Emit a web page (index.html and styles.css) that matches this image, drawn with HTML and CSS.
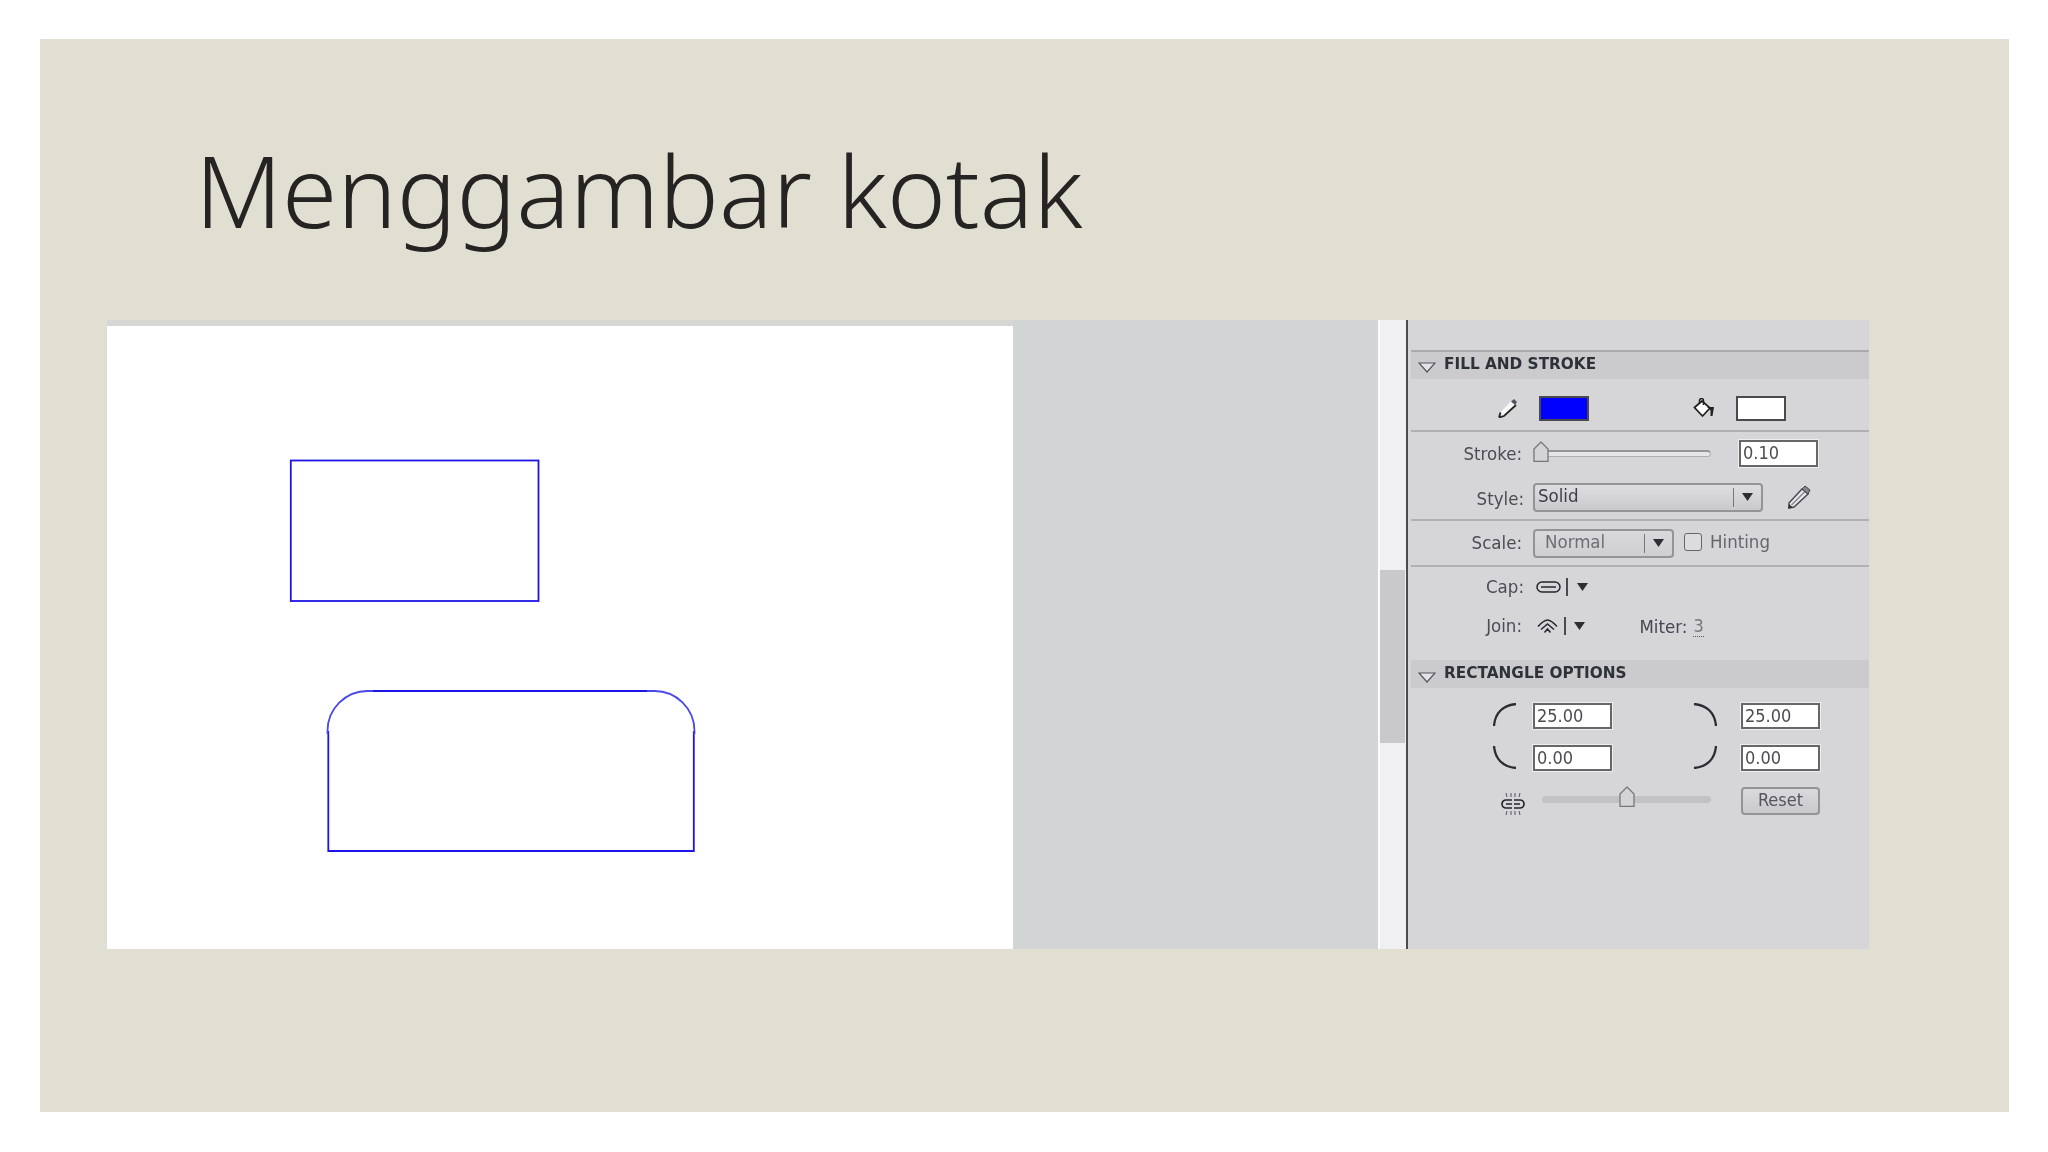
FILE: index.html
```html
<!DOCTYPE html>
<html lang="id">
<head>
<meta charset="utf-8">
<title>Menggambar kotak</title>
<link rel="stylesheet" href="styles.css">
</head>
<body>
<main class="slide">
  <header class="title-box"><h1 class="title">Menggambar kotak</h1></header>
  <section class="screen">
    <div class="stage">
      <div class="stage-band"></div>
      <svg class="canvas" viewBox="0 0 906 623" aria-label="Kanvas">
        <rect class="shape" x="183.800" y="134.500" width="247.700" height="140.500"/>
        <path class="shape" d="M221.300 405 V525 H586.800 V405 M261.500 365 H546.500"/>
        <path class="shape-arc" d="M220.500 408 V405 A40 40 0 0 1 260.500 365 H266 M540 365 H546.500 A40 40 0 0 1 587.500 405 V408"/>
      </svg>
    </div>
    <div class="paste"></div>
    <div class="scrollbar"><div class="scroll-thumb"></div></div>
    <aside class="panel">
      <div class="panel-top"></div>

      <div class="section-head section-head-first">
        <svg class="twist" viewBox="0 0 18 11"><path d="M1 1 H17 L9 10 Z"/></svg>
        <span class="section-name">FILL AND STROKE</span>
      </div>

      <div class="row row-fill">
        <svg class="ico-pencil" viewBox="0 0 20 20"><path class="pen-body" d="M2 15 L13 3 L18 8 L6 18 Z"/><path class="pen-edge" d="M1 19.500 L2.500 14.500 M1 19.500 L6 18 L18 7"/><path class="pen-head" d="M13 3.500 L16 1 L19 4 L17 7 Z"/></svg>
        <div class="swatch swatch-blue"></div>
        <svg class="ico-bucket" viewBox="0 0 22 20"><path class="bucket" d="M1.500 9.500 L9 3 L17 10 L9.500 18 Z"/><path class="bucket-line" d="M6.500 6 V2.500 A2 2 0 0 1 10.500 2.500 V7"/><path class="bucket-tip" d="M14 9 H21 L19.500 18 H17.500 V12 Z"/></svg>
        <div class="swatch swatch-white"></div>
      </div>

      <div class="row row-stroke">
        <span class="label">Stroke:</span>
        <div class="slider slider-stroke">
          <div class="track track-double"></div>
          <svg class="thumb thumb-start" viewBox="0 0 16 21"><path d="M1 20.500 V8 L8 1 L15 8 V20.500 Z"/></svg>
        </div>
        <div class="field field-stroke">0.10</div>
      </div>

      <div class="row row-style">
        <span class="label label-low">Style:</span>
        <div class="select select-style"><span class="select-text">Solid</span><span class="select-arrow"><svg class="arrow" viewBox="0 0 11 8"><path d="M0 0 H11 L5.500 8 Z"/></svg></span></div>
        <svg class="ico-edit" viewBox="0 0 24 24"><path class="edit-body" d="M2 18 L15 4 L21 9 L7 22 L2 23 Z"/><path class="edit-line" d="M4.500 20 L18 6.500"/><path class="edit-tip" d="M15 4 L18 1 L23 5 L21 9 Z"/><path class="edit-nib" d="M1 23.500 L2 19 L6 22.500 Z"/></svg>
      </div>

      <div class="row row-scale">
        <span class="label">Scale:</span>
        <div class="select select-scale"><span class="select-text select-text-dim">Normal</span><span class="select-arrow"><svg class="arrow" viewBox="0 0 11 8"><path d="M0 0 H11 L5.500 8 Z"/></svg></span></div>
        <div class="check"></div>
        <span class="check-label">Hinting</span>
      </div>

      <div class="row row-cap">
        <span class="label label-wide">Cap:</span>
        <svg class="ico-cap" viewBox="0 0 25 12"><rect class="ico-line" x="1" y="1" width="23" height="10" rx="5"/><path class="ico-line" d="M5 6 H20"/></svg>
        <span class="vsep vsep-cap"></span>
        <svg class="arrow arrow-cap" viewBox="0 0 11 8"><path d="M0 0 H11 L5.500 8 Z"/></svg>
      </div>

      <div class="row row-join">
        <span class="label">Join:</span>
        <svg class="ico-join" viewBox="0 0 21 15"><path class="ico-line" d="M1 7.500 Q7 1 10.500 1 Q14 1 20 7.500 M4 10.500 L10.500 5 L17 10.500 M7.500 13.500 L10.500 10 L13.500 13.500"/></svg>
        <span class="vsep vsep-join"></span>
        <svg class="arrow arrow-join" viewBox="0 0 11 8"><path d="M0 0 H11 L5.500 8 Z"/></svg>
        <span class="miter-label">Miter:</span>
        <span class="miter-value">3</span>
      </div>

      <div class="section-head section-head-second">
        <svg class="twist" viewBox="0 0 18 11"><path d="M1 1 H17 L9 10 Z"/></svg>
        <span class="section-name">RECTANGLE OPTIONS</span>
      </div>

      <div class="corners">
        <svg class="corner" viewBox="0 0 24 24"><path d="M23 1 C10 2 2 10 1 23"/></svg>
        <div class="field">25.00</div>
        <svg class="corner" viewBox="0 0 24 24"><path d="M1 1 C14 2 22 10 23 23"/></svg>
        <div class="field">25.00</div>

        <svg class="corner" viewBox="0 0 24 24"><path d="M1 1 C2 14 10 22 23 23"/></svg>
        <div class="field">0.00</div>
        <svg class="corner" viewBox="0 0 24 24"><path d="M23 1 C22 14 14 22 1 23"/></svg>
        <div class="field">0.00</div>

        <svg class="ico-link" viewBox="0 0 24 24"><path class="ico-link-line" d="M11 8 H5 A4 4 0 0 0 5 16 H11 M13 8 H19 A4 4 0 0 1 19 16 H13 M5 12 H11 M13 12 H19"/><path class="ico-dots" d="M5 1 L6 5 M10 1 V5 M14 1 V5 M19 1 L18 5 M5 23 L6 19 M10 23 V19 M14 23 V19 M19 23 L18 19"/></svg>
        <div class="slider slider-radius">
          <div class="track track-radius"></div>
          <svg class="thumb thumb-mid" viewBox="0 0 16 21"><path d="M1 20.500 V8 L8 1 L15 8 V20.500 Z"/></svg>
        </div>
        <div class="reset">Reset</div>
      </div>
    </aside>
  </section>
</main>
</body>
</html>
```
FILE: styles.css
```css
* { box-sizing: border-box; }

html, body { margin: 0; height: 1152px; background: #fff; overflow: hidden; }

body { padding: 39px 39px 40px 40px; }

.slide {
  width: 1969px;
  height: 1073px;
  background: #e1dfd2;
  display: flex;
  flex-direction: column;
}

.title-box { height: 281px; padding: 90px 0 0 155px; }

.title {
  margin: 0;
  font-family: "Noto Sans", sans-serif;
  font-weight: 300;
  font-size: 100px;
  line-height: 120px;
  letter-spacing: -0.1px;
  color: #262422;
  white-space: nowrap;
}

.screen { display: flex; height: 629px; margin-left: 67px; width: 1762px; }

.stage { width: 906px; display: flex; flex-direction: column; }
.stage-band { height: 6px; background: #d6d6d4; }
.canvas { display: block; width: 906px; height: 623px; background: #fff; }
.shape { fill: none; stroke: #1d14e6; stroke-width: 1.800; }
.shape-arc { fill: none; stroke: #4a48e6; stroke-width: 1.800; }

.paste { width: 365px; background: #d3d4d6; }

.scrollbar {
  width: 28px;
  padding: 250px 1px 0 2px;
  background: #f0f0f2;
  border-left: 2px solid #fbfbfb;
}
.scroll-thumb { height: 173px; background: #c9c9cb; margin-left: -2px; }

.panel {
  width: 463px;
  padding-left: 3px;
  background: #d6d5d8;
  border-left: 2px solid #4b4b4e;
  font-family: "DejaVu Sans", sans-serif;
  font-stretch: condensed;
  font-size: 18px;
  color: #4c4c52;
  filter: blur(0.35px);
}

.panel-top { height: 30px; }

.section-head { display: flex; align-items: center; background: #cbcbcd; padding-left: 7px; }
.section-head-first { height: 29px; border-top: 2px solid #a9a9ab; }
.section-head-second { height: 28px; }
.twist { width: 18px; height: 11px; margin: 7px 8px 0 0; }
.section-head-first .twist { margin-top: 4px; }
.twist path { fill: #e4e4e6; stroke: #55565a; stroke-width: 1.200; }
.section-name {
  font-weight: 700;
  font-stretch: normal;
  font-size: 15.300px;
  color: #2e3138;
  white-space: nowrap;
  line-height: 18px;
  padding-bottom: 3px;
}

.row { display: flex; align-items: center; }
.label { width: 111px; margin-right: 11px; text-align: right; line-height: 20px; font-size: 18.500px; white-space: nowrap; }
.label-low { width: 113px; margin-right: 9px; padding-top: 3px; line-height: 23px; }
.label-wide { width: 113px; margin-right: 9px; }

.row-fill { height: 53px; padding: 7px 0 0 87px; border-bottom: 2px solid #b1b1b3; }
.row-stroke { height: 43px; }
.row-style { height: 46px; border-bottom: 2px solid #b1b1b3; }
.row-scale { height: 46px; border-bottom: 2px solid #b1b1b3; }
.row-cap { height: 39px; }
.row-join { height: 54px; padding-bottom: 14px; }

.swatch { width: 50px; height: 25px; border: 2px solid #4a4a4e; }
.swatch-blue { margin-left: 21px; background: #0000ff; }
.swatch-white { margin-left: 21px; background: #fff; }

.ico-pencil { width: 20px; height: 20px; }
.pen-body { fill: #f8f8f8; }
.pen-edge { fill: none; stroke: #222; stroke-width: 1.800; }
.pen-head { fill: #56565a; }

.ico-bucket { width: 22px; height: 20px; margin-left: 104px; }
.bucket { fill: #fff; stroke: #222; stroke-width: 1.700; }
.bucket-line { fill: none; stroke: #222; stroke-width: 1.500; }
.bucket-tip { fill: #222; }

.slider { position: relative; height: 21px; display: flex; align-items: center; }
.slider-stroke { width: 178px; margin-top: -4px; }
.slider-radius { width: 169px; margin-left: 9px; grid-column: span 2; align-self: start; justify-self: start; margin-top: -1px; }
.track { width: 100%; height: 7px; margin-top: 4px; border-radius: 4px; background: #c2c2c4; }
.track-double { background: #e6e6e8; border: 1px solid #b0b0b2; border-top: 2px solid #959598; border-left: 0; }
.track-radius { margin-top: 5px; }
.thumb { position: absolute; top: 0; width: 16px; height: 21px; }
.thumb path { fill: #d4d4d6; stroke: #77777b; stroke-width: 1.300; stroke-linejoin: round; }
.thumb-start { left: 0; }
.thumb-mid { left: 77px; }

.field {
  width: 79px;
  height: 27px;
  padding-left: 2px;
  background: #fff;
  border: 2px solid #67676a;
  outline: 1px solid #eeeef0;
  line-height: 22px;
  white-space: nowrap;
}
.field-stroke { margin-left: 28px; }

.select {
  display: flex;
  align-items: center;
  justify-content: space-between;
  height: 29px;
  border: 2px solid #949497;
  border-radius: 4px;
  background: linear-gradient(#dedee0, #cacacc);
}
.select-style { width: 230px; }
.select-scale { width: 141px; background: linear-gradient(#d9d9db, #cfcfd1); }
.select-text { padding: 0 0 2px 3px; line-height: 22px; font-size: 18.500px; color: #3e3e44; }
.select-text-dim { padding-left: 10px; color: #6d6d72; }
.select-arrow {
  display: flex;
  align-items: center;
  justify-content: center;
  width: 28px;
  height: 19px;
  border-left: 1px solid #77777a;
}
.arrow { display: block; width: 11px; height: 8px; }
.arrow path { fill: #2e2e32; }

.ico-edit { width: 24px; height: 24px; margin-left: 24px; }
.edit-body { fill: #e9e9eb; stroke: #4a4a4e; stroke-width: 1.500; }
.edit-line { fill: none; stroke: #85858a; stroke-width: 1.500; }
.edit-tip { fill: #85858a; stroke: #444; stroke-width: 1; }
.edit-nib { fill: #333; }

.check {
  width: 18px;
  height: 18px;
  margin: 0 0 3px 10px;
  border: 1.500px solid #66666a;
  border-radius: 3px;
  background: #dcdcde;
}
.check-label { margin-left: 8px; padding-bottom: 4px; font-size: 18.500px; color: #66666c; }

.ico-line { fill: none; stroke: #26262a; stroke-width: 1.500; }
.ico-link-line { fill: none; stroke: #26262a; stroke-width: 1.700; }
.ico-dots { fill: none; stroke: #55555a; stroke-width: 1; }

.ico-cap { width: 25px; height: 12px; margin-left: 3px; }
.ico-join { width: 21px; height: 15px; margin-left: 4px; }
.vsep { display: block; width: 1.500px; height: 18px; background: #4b4b4f; }
.vsep-cap { margin-left: 5px; }
.vsep-join { margin-left: 6px; }
.arrow-cap { margin-left: 9px; }
.arrow-join { margin-left: 8px; }
.miter-label { margin-left: 55px; font-size: 18.500px; color: #45464f; }
.miter-value {
  margin-left: 6px;
  color: #77777b;
  border-bottom: 1px dotted #55555a;
  line-height: 20px;
}

.corners {
  display: grid;
  grid-template-columns: 40px 160px 48px 79px;
  grid-template-rows: 26px 26px 28px;
  row-gap: 16px;
  padding: 15px 0 0 82px;
}
.corner { width: 24px; height: 24px; }
.corner path { fill: none; stroke: #2c2c30; stroke-width: 2.300; }
.corners .field { height: 26px; }

.ico-link { width: 24px; height: 24px; margin: 5px 0 0 8px; }

.reset {
  width: 79px;
  height: 28px;
  text-align: center;
  line-height: 22px;
  color: #55555b;
  border: 2px solid #949497;
  border-radius: 4px;
  background: linear-gradient(#dadadc, #c9c9cb);
}
```
